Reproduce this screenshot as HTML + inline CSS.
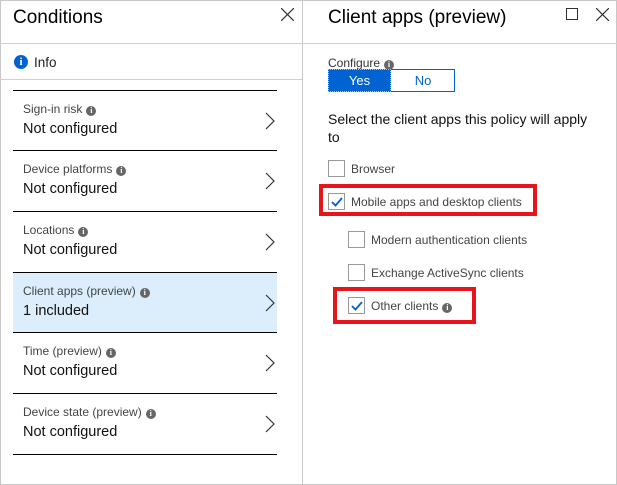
<!DOCTYPE html>
<html><head><style>
*{margin:0;padding:0;box-sizing:border-box}
body{width:617px;height:485px;background:#fff;font-family:"Liberation Sans",sans-serif;position:relative;overflow:hidden;color:#000}
.a{position:absolute}
.ic{display:inline-block;width:10px;height:10px;border-radius:50%;background:#666;color:#fff;font-size:8px;font-weight:bold;text-align:center;line-height:10px;font-family:"Liberation Serif",serif;vertical-align:0px;margin-left:4px}
.row{position:absolute;left:13px;width:264px;height:61px;border-top:1px solid #000}
.row .l{position:absolute;left:10px;top:11px;font-size:12px;color:#444}
.row .v{position:absolute;left:10px;top:30px;font-size:14.5px;color:#111}
.row svg{position:absolute;left:252px;top:21px}
.cb{position:absolute;width:17px;height:17px;border:1px solid #999;background:#fff}
.lbl{position:absolute;font-size:12px;color:#444}
</style></head><body>
<div class="a" style="left:0;top:0;width:617px;height:485px;border:1px solid #c8c8c8"></div>
<div class="a" style="left:302px;top:0;width:1px;height:485px;background:#c8c8c8"></div>
<div class="a" style="left:0;top:43px;width:617px;height:1px;background:#d0d0d0"></div>
<div class="a" style="left:0;top:79px;width:302px;height:1px;background:#d0d0d0"></div>
<div class="a" style="left:13px;top:7px;font-size:19px;">Conditions</div>
<svg class="a" style="left:281px;top:8px" width="13" height="13"><path d="M0 0L13 13M13 0L0 13" stroke="#333" stroke-width="1.2"/></svg>
<div class="a" style="left:14px;top:55px;width:14px;height:14px;border-radius:50%;background:#0063d1;color:#fff;font-size:11px;font-weight:bold;text-align:center;line-height:14px;font-family:'Liberation Serif',serif">i</div>
<div class="a" style="left:34px;top:55px;font-size:13.5px;color:#222">Info</div>

<div class="row" style="top:90px"><div class="l">Sign-in risk<span class="ic">i</span></div><div class="v">Not configured</div><svg width="10" height="18"><path d="M1 1L9 9L1 17" fill="none" stroke="#333" stroke-width="1.2"/></svg></div>
<div class="row" style="top:150px"><div class="l">Device platforms<span class="ic">i</span></div><div class="v">Not configured</div><svg width="10" height="18"><path d="M1 1L9 9L1 17" fill="none" stroke="#333" stroke-width="1.2"/></svg></div>
<div class="row" style="top:211px"><div class="l">Locations<span class="ic">i</span></div><div class="v">Not configured</div><svg width="10" height="18"><path d="M1 1L9 9L1 17" fill="none" stroke="#333" stroke-width="1.2"/></svg></div>
<div class="row" style="top:272px;background:#dcedfc"><div class="l">Client apps (preview)<span class="ic">i</span></div><div class="v">1 included</div><svg width="10" height="18"><path d="M1 1L9 9L1 17" fill="none" stroke="#333" stroke-width="1.2"/></svg></div>
<div class="row" style="top:332px"><div class="l">Time (preview)<span class="ic">i</span></div><div class="v">Not configured</div><svg width="10" height="18"><path d="M1 1L9 9L1 17" fill="none" stroke="#333" stroke-width="1.2"/></svg></div>
<div class="row" style="top:393px"><div class="l">Device state (preview)<span class="ic">i</span></div><div class="v">Not configured</div><svg width="10" height="18"><path d="M1 1L9 9L1 17" fill="none" stroke="#333" stroke-width="1.2"/></svg></div>
<div class="a" style="left:13px;top:454px;width:264px;height:1px;background:#000"></div>

<div class="a" style="left:328px;top:7px;font-size:19px;">Client apps (preview)</div>
<div class="a" style="left:566px;top:8px;width:12px;height:12px;border:1.2px solid #333"></div>
<svg class="a" style="left:596px;top:8px" width="13" height="13"><path d="M0 0L13 13M13 0L0 13" stroke="#333" stroke-width="1.2"/></svg>
<div class="lbl" style="left:328px;top:56px;color:#333">Configure<span class="ic">i</span></div>
<div class="a" style="left:328px;top:69px;width:127px;height:23px;border:1px solid #0063d1"></div>
<div class="a" style="left:328px;top:69px;width:63px;height:23px;background:#0063d1;border:1px dotted #9cc8ff;color:#fff;font-size:13px;text-align:center;line-height:21px">Yes</div>
<div class="a" style="left:391px;top:69px;width:64px;height:23px;color:#0063d1;font-size:13px;text-align:center;line-height:23px">No</div>
<div class="a" style="left:328px;top:110px;font-size:14px;line-height:18px;width:270px;color:#111">Select the client apps this policy will apply to</div>

<div class="cb" style="left:328px;top:160px"></div><div class="lbl" style="left:351px;top:162px">Browser</div>
<div class="a" style="left:319px;top:184px;width:218px;height:32px;border:4px solid #e8141c"></div>
<div class="cb" style="left:328px;top:193px"></div><svg class="a" style="left:331px;top:197px" width="12" height="10"><path d="M1 5L4.5 8.5L11 1" fill="none" stroke="#0063d1" stroke-width="1.8"/></svg>
<div class="lbl" style="left:351px;top:195px">Mobile apps and desktop clients</div>
<div class="cb" style="left:348px;top:231px"></div><div class="lbl" style="left:371px;top:233px">Modern authentication clients</div>
<div class="cb" style="left:348px;top:264px"></div><div class="lbl" style="left:371px;top:266px">Exchange ActiveSync clients</div>
<div class="a" style="left:333px;top:287px;width:143px;height:37px;border:4px solid #e8141c"></div>
<div class="cb" style="left:348px;top:297px"></div><svg class="a" style="left:351px;top:301px" width="12" height="10"><path d="M1 5L4.5 8.5L11 1" fill="none" stroke="#0063d1" stroke-width="1.8"/></svg>
<div class="lbl" style="left:371px;top:299px">Other clients<span class="ic">i</span></div>
</body></html>
